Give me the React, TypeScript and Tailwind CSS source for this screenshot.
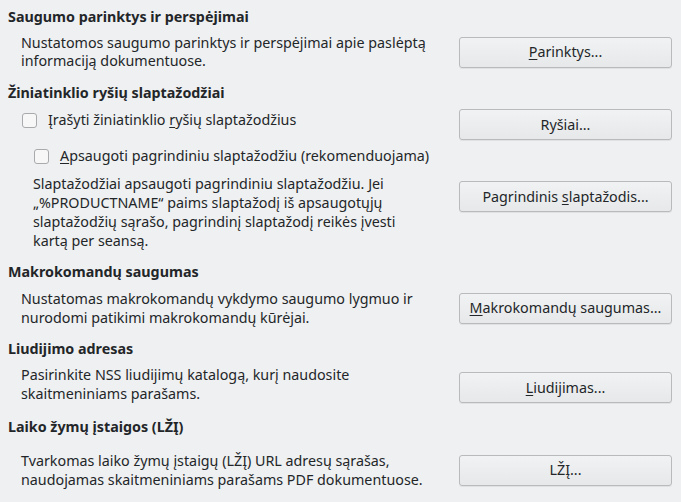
import type { ReactNode } from "react";

const Heading = ({ children, className = "" }: { children: ReactNode; className?: string }) => (
  <div className={`pl-2 h-[18px] leading-[18px] font-bold text-[14.3px] ${className}`}>{children}</div>
);

const Button = ({ children, className = "" }: { children: ReactNode; className?: string }) => (
  <div
    className={`w-[213px] h-[31px] shrink-0 flex items-center justify-center rounded-[3px] border border-[#b9babb] bg-gradient-to-b from-[#f1f2f3] to-[#e7e8e9] shadow-[0_1px_0_rgba(0,0,0,0.06)] text-[14.3px] ${className}`}
  >
    <span>{children}</span>
  </div>
);

const Checkbox = ({ children, className = "" }: { children: ReactNode; className?: string }) => (
  <div className={`flex items-center h-[18px] ${className}`}>
    <span className="w-[15px] h-[15px] rounded-[3px] border border-[#a9aaab] bg-[#f7f7f7] shrink-0" />
    <span className="ml-[11px] text-[14.3px] leading-[18px]">{children}</span>
  </div>
);

const U = ({ children }: { children: ReactNode }) => <span className="underline underline-offset-2">{children}</span>;

export default function App() {
  return (
    <div
      className="w-[681px] h-[502px] bg-[#eff0f1] text-[#232629] pt-2 pr-[9px] overflow-hidden"
      style={{ fontFamily: '"Noto Sans", "Open Sans", sans-serif' }}
    >
      <Heading>Saugumo parinktys ir perspėjimai</Heading>
      <div className="mt-2 flex items-center justify-between">
        <p className="pl-[21px] text-[14.3px] leading-[18px]">
          Nustatomos saugumo parinktys ir perspėjimai apie paslėptą
          <br />
          informaciją dokumentuose.
        </p>
        <Button>
          <U>P</U>arinktys...
        </Button>
      </div>

      <Heading className="mt-[14px]">Žiniatinklio ryšių slaptažodžiai</Heading>
      <div className="mt-[7px] flex items-start justify-between">
        <Checkbox className="mt-[2px] pl-[22px]">
          Įrašyti žiniatinklio <U>r</U>yšių slaptažodžius
        </Checkbox>
        <Button>Ryšiai...</Button>
      </div>
      <Checkbox className="mt-[7px] pl-[34px]">
        <U>A</U>psaugoti pagrindiniu slaptažodžiu (rekomenduojama)
      </Checkbox>
      <div className="mt-[9px] flex items-start justify-between">
        <p className="pl-[33px] text-[14.3px] leading-[19px]">
          Slaptažodžiai apsaugoti pagrindiniu slaptažodžiu. Jei
          <br />
          „%PRODUCTNAME“ paims slaptažodį iš apsaugotųjų
          <br />
          slaptažodžių sąrašo, pagrindinį slaptažodį reikės įvesti
          <br />
          kartą per seansą.
        </p>
        <Button className="mt-[7px]">
          Pagrindinis <U>s</U>laptažodis...
        </Button>
      </div>

      <Heading className="mt-[13px]">Makrokomandų saugumas</Heading>
      <div className="mt-[8px] flex items-center justify-between">
        <p className="pl-[21px] text-[14.3px] leading-[19px]">
          Nustatomas makrokomandų vykdymo saugumo lygmuo ir
          <br />
          nurodomi patikimi makrokomandų kūrėjai.
        </p>
        <Button>
          <U>M</U>akrokomandų saugumas...
        </Button>
      </div>

      <Heading className="mt-[13px]">Liudijimo adresas</Heading>
      <div className="mt-[6px] flex items-center justify-between">
        <p className="pl-[21px] text-[14.3px] leading-[19px]">
          Pasirinkite NSS liudijimų katalogą, kurį naudosite
          <br />
          skaitmeniniams parašams.
        </p>
        <Button className="mt-[8px]">
          <U>L</U>iudijimas...
        </Button>
      </div>

      <Heading className="mt-[15px]">Laiko žymų įstaigos (LŽĮ)</Heading>
      <div className="mt-[15px] flex items-center justify-between">
        <p className="pl-[21px] text-[14.3px] leading-[19px]">
          Tvarkomas laiko žymų įstaigų (LŽĮ) URL adresų sąrašas,
          <br />
          naudojamas skaitmeniniams parašams PDF dokumentuose.
        </p>
        <Button>LŽĮ...</Button>
      </div>
    </div>
  );
}
